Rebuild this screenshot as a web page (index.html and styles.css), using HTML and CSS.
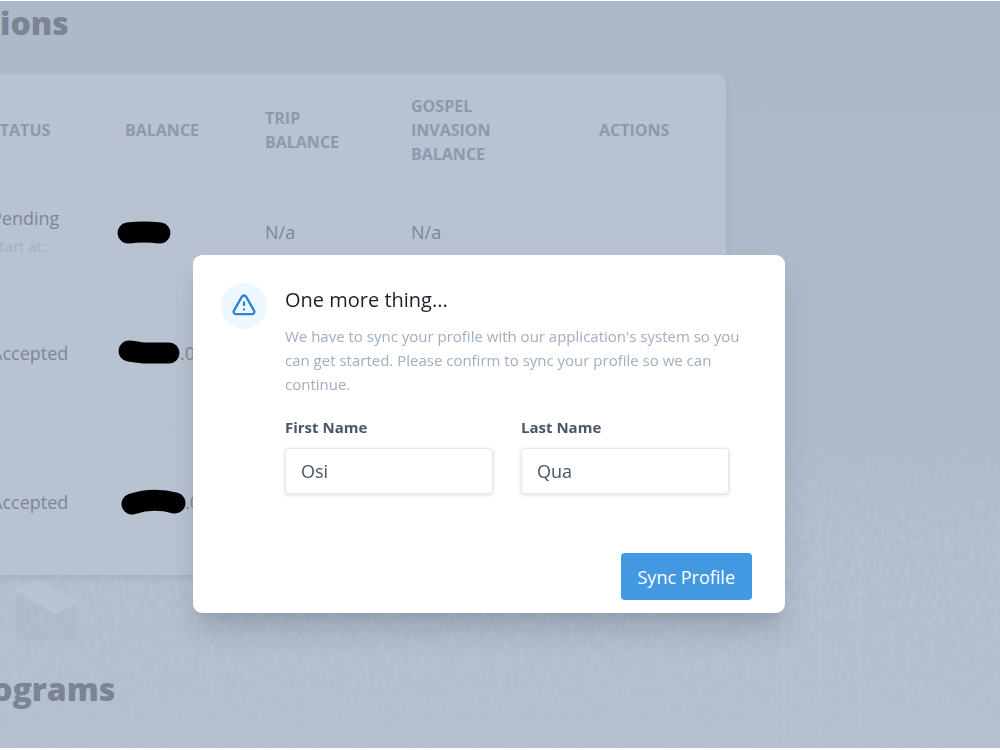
FILE: index.html
```html
<!DOCTYPE html>
<html lang="en">
<head>
<meta charset="utf-8">
<title>Sync Profile</title>
<link rel="stylesheet" href="styles.css">
</head>
<body>
<div class="page">
  <svg class="backdrop" viewBox="0 0 1000 748" preserveAspectRatio="none" aria-hidden="true">
    <defs>
      <filter id="grain" x="0" y="0" width="100%" height="100%">
        <feTurbulence type="fractalNoise" baseFrequency="0.2 0.1" numOctaves="3" seed="4"/>
        <feColorMatrix values="0 0 0 0 0.73  0 0 0 0 0.78  0 0 0 0 0.84  1.2 0 0 0 -0.4"/>
      </filter>
      <linearGradient id="fade" x1="0" y1="0" x2="0" y2="1">
        <stop offset="0" stop-color="#fff" stop-opacity="0"/>
        <stop offset=".4" stop-color="#fff"/>
        <stop offset=".6" stop-color="#fff"/>
        <stop offset="1" stop-color="#fff" stop-opacity=".3"/>
      </linearGradient>
      <mask id="low"><rect y="400" width="1000" height="348" fill="url(#fade)"/></mask>
    </defs>
    <g mask="url(#low)"><rect y="400" width="1000" height="348" filter="url(#grain)" opacity=".3"/></g>
    <path d="M14 588 L38 580 L78 602 L54 614Z" fill="#b8c3d3"/>
    <path d="M16 592 L54 614 L78 604 V640 H16Z" fill="#abb6c6" opacity=".4"/>
    <path d="M800 477 L826 502 L860 532 V748 M820 505 V748 M784 612 V748" fill="none" stroke="#bac5d4" stroke-width="3" opacity=".35"/>
    <path d="M0 631.500 H1000" stroke="#adbfce" stroke-width="1"/>
  </svg>

  <main class="content">
    <h2 class="heading">ions</h2>
    <div class="card">
      <table class="table">
        <colgroup>
          <col class="col-status"><col class="col-balance"><col class="col-trip"><col class="col-gospel"><col>
        </colgroup>
        <thead>
          <tr><th>Status</th><th>Balance</th><th>Trip<br>Balance</th><th>Gospel<br>Invasion<br>Balance</th><th>Actions</th></tr>
        </thead>
        <tbody>
          <tr class="row-short">
            <td>Pending<small class="note">Start at:</small></td>
            <td><div class="amount"><svg width="54" height="24" viewBox="0 0 54 24"><path d="M11 13 Q27 11 43 13"/></svg></div></td>
            <td>N/a</td><td>N/a</td><td></td>
          </tr>
          <tr>
            <td>Accepted</td>
            <td><div class="amount"><svg width="63" height="24" viewBox="0 0 63 24"><path d="M12 10 Q20 11 26 12 H52"/></svg><span>.00</span></div></td>
            <td></td><td></td><td></td>
          </tr>
          <tr>
            <td>Accepted</td>
            <td><div class="amount amount-wide"><svg width="64" height="24" viewBox="0 0 64 24"><path d="M11 14 Q32 7 54 13"/></svg><span>.00</span></div></td>
            <td></td><td></td><td></td>
          </tr>
        </tbody>
      </table>
    </div>
    <h2 class="heading heading-programs">ograms</h2>
  </main>
</div>

<div class="overlay">
  <form class="modal" role="dialog" aria-labelledby="modal-title">
    <div class="modal-body">
      <div class="badge">
        <svg width="28" height="28" viewBox="0 0 24 24" fill="none" stroke="#3182ce" stroke-width="2" stroke-linecap="round" stroke-linejoin="round" aria-hidden="true">
          <path d="M12 9v2m0 4h.01m-6.938 4h13.856c1.540 0 2.502-1.667 1.732-3L13.732 4c-.770-1.333-2.694-1.333-3.464 0L3.340 16c-.770 1.333.192 3 1.732 3z"/>
        </svg>
      </div>
      <div class="modal-text">
        <h3 class="title" id="modal-title">One more thing...</h3>
        <p class="lead">We have to sync your profile with our application's system so you can get started. Please confirm to sync your profile so we can continue.</p>
        <div class="fields">
          <div class="field">
            <label for="first">First Name</label>
            <input id="first" type="text" value="Osi">
          </div>
          <div class="field">
            <label for="last">Last Name</label>
            <input id="last" type="text" value="Qua">
          </div>
        </div>
      </div>
    </div>
    <div class="modal-footer"><button class="primary" type="button">Sync Profile</button></div>
  </form>
</div>
</body>
</html>
```

FILE: styles.css
```css
* { box-sizing: border-box; }

body {
  margin: 0;
  background: #fff;
  font-family: "Open Sans", "Noto Sans", sans-serif;
  font-size: 18px;
  color: #7c8796;
}

.page {
  position: relative;
  height: calc(100vh - 3px);
  margin-top: 1px;
  overflow: hidden;
  background: linear-gradient(#aeb9c8, #afbaca 60%, #b4bfcf);
}

.backdrop {
  position: absolute;
  inset: 0;
  width: 100%;
  height: 100%;
}

.content { position: relative; }

.heading {
  margin: 0;
  padding-bottom: 29px;
  font-size: 32px;
  font-weight: 800;
  line-height: 44px;
  color: #7a8494;
}

.heading-programs {
  margin: 92px 0 0 -8px;
  padding: 0;
}

.card {
  margin: 0 274px 0 -36px;
  border-radius: 9px;
  background: #b8c2d1;
  box-shadow: 0 3px 6px rgba(80, 95, 115, 0.14);
}

.table {
  width: 100%;
  table-layout: fixed;
  border-collapse: collapse;
}

.col-status { width: 134px; }
.col-balance { width: 140px; }
.col-trip { width: 146px; }
.col-gospel { width: 188px; }

th, td {
  padding: 2px 0 0 27px;
  text-align: left;
  vertical-align: middle;
}

th {
  height: 110px;
  font-size: 16px;
  line-height: 24px;
  font-weight: 700;
  text-transform: uppercase;
  color: #8c99ae;
}

td { height: 149px; line-height: 28px; }
.row-short td { height: 93px; }
tbody tr { border-top: 1px solid #b0becd; }

.note {
  display: block;
  font-size: 15px;
  color: #a2b0c2;
}

.amount {
  display: flex;
  align-items: center;
  margin-left: -8px;
  white-space: nowrap;
}

.amount-wide { margin-left: -4px; }

.amount svg { overflow: visible; }

.amount path {
  fill: none;
  stroke: #000;
  stroke-width: 21px;
  stroke-linecap: round;
}

.overlay {
  position: fixed;
  inset: 0;
  display: flex;
  justify-content: center;
  align-items: flex-start;
  padding: 255px 22px 0 0;
}

.modal {
  width: 592px;
  max-width: 100%;
  border-radius: 9px;
  background: #fff;
  box-shadow: 0 20px 28px -4px rgba(60, 75, 85, 0.22), 0 8px 12px -6px rgba(60, 75, 85, 0.12);
}

.modal-body {
  display: flex;
  gap: 18px;
  padding: 28px 28px 59px;
}

.badge {
  display: flex;
  flex: none;
  align-items: center;
  justify-content: center;
  width: 46px;
  height: 46px;
  border-radius: 50%;
  background: #ebf8ff;
}

.modal-text { flex: 1; }

.title {
  margin: 0;
  font-size: 20px;
  font-weight: 400;
  line-height: 34px;
  color: #1a202c;
}

.lead {
  margin: 7px 0 19px;
  font-size: 15px;
  line-height: 24px;
  color: #a0aec0;
}

.fields {
  display: grid;
  grid-template-columns: 1fr 1fr;
}

.field { padding-right: 28px; }

.field label {
  display: block;
  margin-bottom: 9px;
  font-size: 15px;
  font-weight: 700;
  line-height: 24px;
  color: #4a5568;
}

.field input {
  display: block;
  width: 100%;
  height: 46px;
  padding: 0 15px;
  border: 1px solid #e2e8f0;
  border-radius: 4px;
  font: inherit;
  color: #4a5568;
  box-shadow: 0 1px 4px rgba(0, 0, 0, 0.14);
}

.modal-footer {
  display: flex;
  justify-content: flex-end;
  padding: 0 33px 13px;
}

.primary {
  height: 47px;
  padding: 0 17px;
  border: 0;
  border-radius: 4px;
  background: #4299e1;
  font: inherit;
  color: #fff;
}
```
